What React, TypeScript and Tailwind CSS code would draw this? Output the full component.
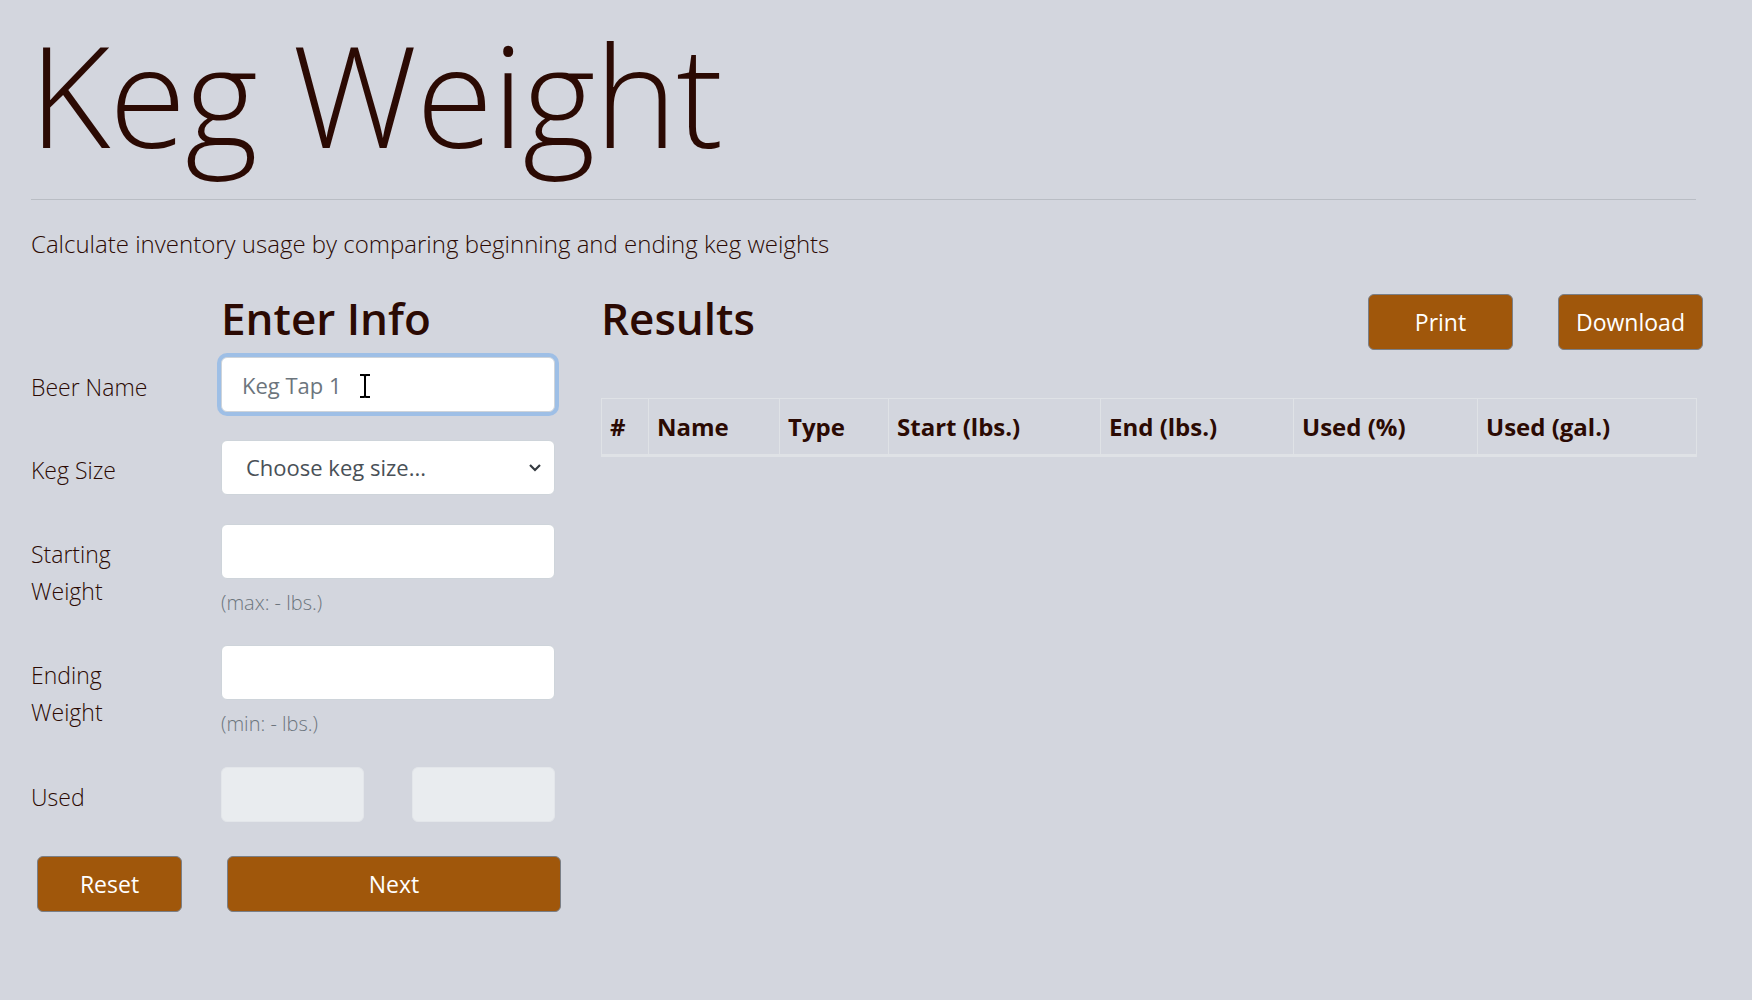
import React from "react";

const columns = [
  { label: "#", w: "w-[47px]" },
  { label: "Name", w: "w-[131px]" },
  { label: "Type", w: "w-[109px]" },
  { label: "Start (lbs.)", w: "w-[212px]" },
  { label: "End (lbs.)", w: "w-[193px]" },
  { label: "Used (%)", w: "w-[184px]" },
  { label: "Used (gal.)", w: "w-[219px]" },
];

const btn =
  "h-[56px] rounded-md border border-[#7a7f87] bg-[#a0570b] text-[23px] text-white font-normal";

const input =
  "h-[55px] w-[334px] rounded-md border border-[#ced4da] bg-white px-5 text-[22px] text-[#495057] outline-none";

const Label = ({ lines }: { lines: string[] }) => (
  <div className="w-[190px] shrink-0 pt-[12px] text-[23px] leading-[37px] font-light">
    {lines.map((l) => (
      <div key={l}>{l}</div>
    ))}
  </div>
);

export default function App() {
  return (
    <div className="min-h-screen bg-[#d3d6de] font-['Open_Sans',sans-serif] text-[#2b0a03]">
      <div className="w-[1665px] ml-[31px]">
        <h1 className="pt-[24px] text-[140px] leading-none font-light tracking-[-1px] -ml-[2px]">
          Keg Weight
        </h1>
        <hr className="mt-[35px] border-0 border-t border-[#b9bdc4]" />
        <p className="mt-[26px] text-[24px] leading-[36px] font-light">
          Calculate inventory usage by comparing beginning and ending keg weights
        </p>

        <div className="flex mt-[30px]">
          {/* Enter info form */}
          <div className="w-[570px] shrink-0">
            <h2 className="pl-[190px] text-[44px] leading-[53px] font-semibold">Enter Info</h2>

            <div className="flex mt-[12px]">
              <Label lines={["Beer Name"]} />
              <div className="relative">
                <input
                  className={`${input} border-[#80bdff] shadow-[0_0_0_4px_rgba(0,123,255,0.25)] placeholder:text-[#6c757d]`}
                  placeholder="Keg Tap 1"
                />
                <svg
                  className="absolute left-[138px] top-[17px]"
                  width="12"
                  height="24"
                  viewBox="0 0 12 24"
                >
                  <path d="M1 1h4l1 1 1-1h4M6 2v20M1 23h4l1-1 1 1h4" stroke="#000" strokeWidth="2" fill="none" />
                </svg>
              </div>
            </div>

            <div className="flex mt-[28px]">
              <Label lines={["Keg Size"]} />
              <div className={`${input} flex items-center justify-between pl-[24px] pr-[12px]`}>
                <span>Choose keg size...</span>
                <svg width="14" height="10" viewBox="0 0 14 10">
                  <path d="M2 2l5 5 5-5" stroke="#343a40" strokeWidth="2.2" fill="none" />
                </svg>
              </div>
            </div>

            <div className="flex mt-[29px]">
              <Label lines={["Starting", "Weight"]} />
              <div>
                <input className={input} />
                <div className="mt-[10px] text-[20px] leading-[28px] text-[#6c757d] font-light">
                  (max: - lbs.)
                </div>
              </div>
            </div>

            <div className="flex mt-[28px]">
              <Label lines={["Ending", "Weight"]} />
              <div>
                <input className={input} />
                <div className="mt-[10px] text-[20px] leading-[28px] text-[#6c757d] font-light">
                  (min: - lbs.)
                </div>
              </div>
            </div>

            <div className="flex mt-[29px]">
              <Label lines={["Used"]} />
              <div className="flex gap-[48px]">
                <div className="h-[55px] w-[143px] rounded-md border border-[#e3e6ea] bg-[#e9ecef]" />
                <div className="h-[55px] w-[143px] rounded-md border border-[#e3e6ea] bg-[#e9ecef]" />
              </div>
            </div>

            <div className="flex gap-[45px] mt-[34px] pl-[6px]">
              <button className={`${btn} w-[145px]`}>Reset</button>
              <button className={`${btn} w-[334px]`}>Next</button>
            </div>
          </div>

          {/* Results */}
          <div className="flex-1">
            <div className="flex items-start justify-between">
              <h2 className="text-[44px] leading-[53px] font-semibold">Results</h2>
              <div className="flex gap-[45px] mt-[2px] -mr-[6px]">
                <button className={`${btn} w-[145px]`}>Print</button>
                <button className={`${btn} w-[145px]`}>Download</button>
              </div>
            </div>

            <table className="mt-[48px] border-collapse table-fixed w-[1095px]">
              <thead>
                <tr>
                  {columns.map((c) => (
                    <th
                      key={c.label}
                      className={`${c.w} h-[57px] border border-[#dfe2e6] border-b-[3px] px-[8px] text-left text-[24px] font-bold`}
                    >
                      {c.label}
                    </th>
                  ))}
                </tr>
              </thead>
            </table>
          </div>
        </div>
      </div>
    </div>
  );
}
